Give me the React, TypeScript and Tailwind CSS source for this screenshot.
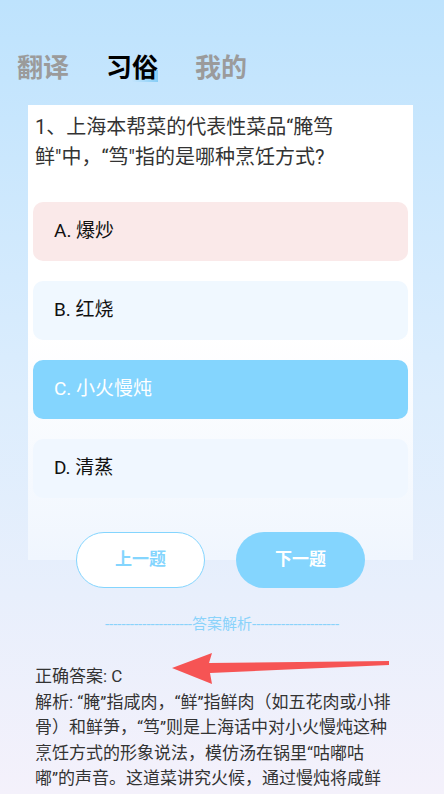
import React from "react";

const font = { fontFamily: 'Roboto, "Noto Sans CJK SC", sans-serif' };

const options = [
  { label: "A. 爆炒", cls: "bg-[#fae9e9] text-[#111]" },
  { label: "B. 红烧", cls: "bg-[#f0f8ff] text-[#111]" },
  { label: "C. 小火慢炖", cls: "bg-[#84d5fe] text-white" },
  { label: "D. 清蒸", cls: "bg-[#f0f7ff] text-[#111]" },
];

const analysis = [
  "正确答案: C",
  "解析: “腌”指咸肉，“鲜”指鲜肉（如五花肉或小排",
  "骨）和鲜笋，“笃”则是上海话中对小火慢炖这种",
  "烹饪方式的形象说法，模仿汤在锅里“咕嘟咕",
  "嘟”的声音。这道菜讲究火候，通过慢炖将咸鲜",
];

export default function App() {
  return (
    <div
      style={font}
      className="relative h-[794px] w-[444px] overflow-hidden bg-gradient-to-b from-[#bee3fd] via-[#dcedfd] to-[#f4f1fb]"
    >
      {/* tabs */}
      <div className="flex gap-[37px] pl-[17px] pt-[52px] text-[26px] font-bold leading-[32px]">
        <span className="text-[#9b9b9b]">翻译</span>
        <span className="relative text-black">
          <span className="absolute bottom-[2px] left-0 h-[12px] w-full bg-gradient-to-r from-transparent via-transparent to-[#86cdf6]" />
          <span className="relative">习俗</span>
        </span>
        <span className="text-[#9b9b9b]">我的</span>
      </div>

      {/* question card */}
      <div className="ml-[28px] mt-[21px] h-[455px] w-[385px] bg-gradient-to-b from-white via-white to-[#f0f6fe] px-[5px] pt-[7px]">
        <p className="pl-[2px] text-[20px] leading-[30px] text-[#333]">
          1、上海本帮菜的代表性菜品“腌笃
          <br />
          鲜"中，“笃"指的是哪种烹饪方式?
        </p>
        <div className="mt-[30px] flex flex-col gap-[20px]">
          {options.map((o) => (
            <div
              key={o.label}
              className={`flex h-[59px] items-center rounded-[10px] pl-[21px] text-[19px] ${o.cls}`}
            >
              {o.label}
            </div>
          ))}
        </div>
      </div>

      {/* buttons */}
      <div className="-mt-[28px] flex gap-[31px] pl-[76px]">
        <button className="h-[56px] w-[129px] rounded-full border border-[#84d5fe] bg-white text-[17px] font-bold text-[#84d5fe]">
          上一题
        </button>
        <button className="h-[56px] w-[129px] rounded-full bg-[#84d5fe] text-[17px] font-bold text-white">
          下一题
        </button>
      </div>

      {/* divider */}
      <div className="mt-[26px] whitespace-nowrap text-center text-[15px] leading-[20px] text-[#8ad3fb]">
        ---------------------答案解析---------------------
      </div>

      {/* analysis */}
      <div className="mt-[30px] pl-[35px] text-[17px] leading-[25.5px] text-[#333]">
        {analysis.map((l) => (
          <div key={l} className="whitespace-nowrap">
            {l}
          </div>
        ))}
      </div>

      {/* annotation arrow */}
      <svg className="absolute left-0 top-0" width="444" height="794" viewBox="0 0 444 794">
        <polygon
          points="172,668 212,653 209,663 389,661 389,665 210,673 212,684"
          fill="#f65454"
        />
      </svg>
    </div>
  );
}
